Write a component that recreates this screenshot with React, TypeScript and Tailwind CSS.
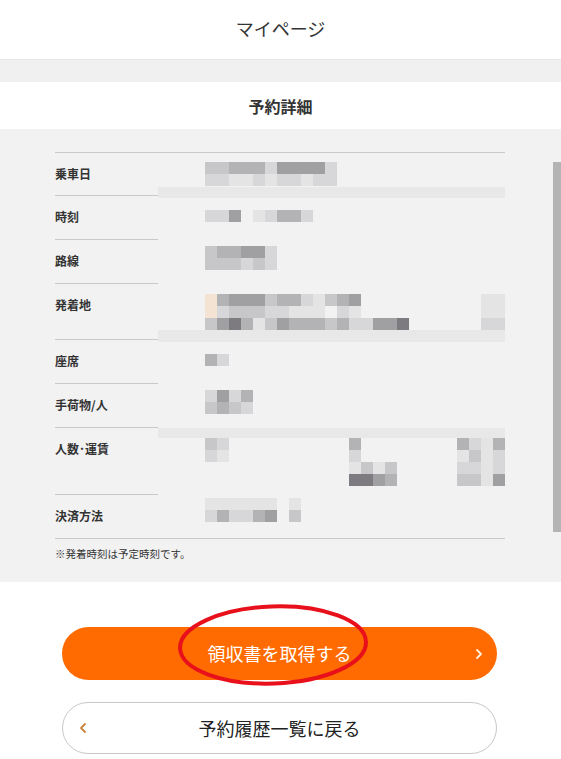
import React from "react";

const LV: Record<string, string> = {
  "0": "bg-transparent",
  "1": "bg-[#e4e4e4]",
  "2": "bg-[#d7d6d8]",
  "3": "bg-[#c7c6c8]",
  "4": "bg-[#b3b2b4]",
  "5": "bg-[#a09fa2]",
  "6": "bg-[#7d7b80]",
  "7": "bg-[#f4e3d3]",
};

function Mosaic({ rows }: { rows: string[] }) {
  return (
    <div className="flex flex-col">
      {rows.map((r, i) => (
        <div key={i} className="flex">
          {r.split("").map((c, j) => (
            <div key={j} className={`w-[12px] h-[12px] ${LV[c]}`} />
          ))}
        </div>
      ))}
    </div>
  );
}

function Row({
  label,
  h,
  last,
  children,
}: {
  label: string;
  h: string;
  last?: boolean;
  children?: React.ReactNode;
}) {
  return (
    <div className={`flex ${h} ${last ? "border-b border-[#c9c9c9]" : ""}`}>
      <div
        className={`w-[103px] h-full shrink-0 pt-[13px] text-[12px] leading-[16px] font-bold text-[#333] ${
          last ? "" : "border-b border-[#c9c9c9]"
        }`}
      >
        {label}
      </div>
      <div className="flex-1">{children}</div>
    </div>
  );
}

export default function App() {
  return (
    <div
      className="w-[561px] h-[759px] bg-white overflow-hidden text-[#333]"
      style={{ fontFamily: '"Noto Sans CJK JP", "Noto Sans", sans-serif' }}
    >
      {/* header */}
      <div className="h-[59px] flex items-center justify-center pb-[3px] text-[18px] text-[#333]">
        マイページ
      </div>
      <div className="h-[23px] bg-[#f0f0f0] border-t border-[#e6e6e6]" />
      <div className="h-[47px] flex items-center justify-center text-[16px] font-bold text-[#333]">
        予約詳細
      </div>

      {/* details */}
      <div className="relative bg-[#f2f2f2] pt-[23px] pb-[21px]">
        <div className="ml-[55px] w-[450px] border-t border-[#c9c9c9]">
          <Row label="乗車日" h="h-[43px]">
            <div className="pt-[9px]">
              <div className="ml-[47px]">
                <Mosaic rows={["33444255552", "22112122122"]} />
              </div>
              <div className="mt-[1px] h-[11px] bg-[#e8e8e8]" />
            </div>
          </Row>
          <Row label="時刻" h="h-[44px]">
            <div className="pt-[14px] ml-[47px]">
              <Mosaic rows={["225012442"]} />
            </div>
          </Row>
          <Row label="路線" h="h-[44px]">
            <div className="pt-[6px] ml-[47px]">
              <Mosaic rows={["344552", "333232"]} />
            </div>
          </Row>
          <Row label="発着地" h="h-[56px]">
            <div className="pt-[10px]">
              <div className="ml-[47px]">
                <Mosaic
                  rows={[
                    "7455534421345000000000011",
                    "7233322111021000000000011",
                    "3564135444342255600000022",
                  ]}
                />
              </div>
              <div className="h-[12px] bg-[#e8e8e8]" />
            </div>
          </Row>
          <Row label="座席" h="h-[44px]">
            <div className="pt-[14px] ml-[47px]">
              <Mosaic rows={["42"]} />
            </div>
          </Row>
          <Row label="手荷物/人" h="h-[44px]">
            <div className="pt-[6px] ml-[47px]">
              <Mosaic rows={["2524", "3432"]} />
            </div>
          </Row>
          <Row label="人数･運賃" h="h-[67px]">
            <div>
              <div className="h-[10px] bg-[#e8e8e8]" />
              <div className="ml-[47px]">
                <Mosaic
                  rows={[
                    "3200000000004000000004214",
                    "2100000000002000000001312",
                    "0000000000001313000002212",
                    "0000000000006654000003315",
                  ]}
                />
              </div>
            </div>
          </Row>
          <Row label="決済方法" h="h-[44px]" last>
            <div className="pt-[3px] ml-[47px]">
              <Mosaic rows={["11111101", "24224503"]} />
            </div>
          </Row>
        </div>
        <div className="ml-[55px] mt-[8px] text-[10.5px] leading-[14px] text-[#333]">
          ※発着時刻は予定時刻です。
        </div>

        {/* scrollbar thumb */}
        <div className="absolute right-0 top-[33px] w-[8px] h-[370px] bg-[#b4b4b4]" />
      </div>

      {/* buttons */}
      <div className="relative ml-[62px] w-[435px] mt-[45px]">
        <button className="relative w-full h-[53px] rounded-full bg-[#ff6b00] flex items-center justify-center text-[18px] text-white">
          <span>領収書を取得する</span>
          <svg
            className="absolute right-[14px] top-1/2 -translate-y-1/2"
            width="8"
            height="12"
            viewBox="0 0 8 12"
            fill="none"
          >
            <path d="M2 2l4 4-4 4" stroke="#fff1de" strokeWidth="1.8" strokeLinecap="round" strokeLinejoin="round" />
          </svg>
        </button>
        <svg
          className="absolute left-[114px] top-[-24px] pointer-events-none"
          width="194"
          height="84"
          viewBox="0 0 194 84"
          fill="none"
        >
          <ellipse cx="97" cy="42" rx="93" ry="38.5" stroke="#e8101a" strokeWidth="4" transform="rotate(-2 97 42)" />
        </svg>
      </div>

      <div className="ml-[62px] w-[435px] mt-[22px]">
        <button className="relative w-full h-[52px] rounded-full bg-white border border-[#c8c8c8] flex items-center justify-center text-[18px] text-[#222]">
          <svg
            className="absolute left-[16px] top-1/2 -translate-y-1/2"
            width="8"
            height="12"
            viewBox="0 0 8 12"
            fill="none"
          >
            <path d="M6 2L2 6l4 4" stroke="#c8853a" strokeWidth="1.8" strokeLinecap="round" strokeLinejoin="round" />
          </svg>
          <span>予約履歴一覧に戻る</span>
        </button>
      </div>
    </div>
  );
}
